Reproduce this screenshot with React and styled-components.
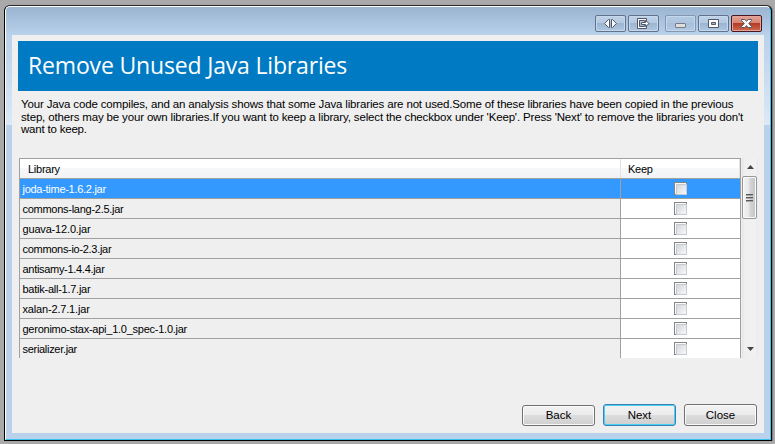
import React from "react";
import styled, { createGlobalStyle } from "styled-components";

const Global = createGlobalStyle`
  * { box-sizing: border-box; }
  html, body { margin: 0; background: #a9a9a9; overflow: hidden; }
`;

const Desktop = styled.div`
  width: 775px;
  height: 444px;
  padding: 5px 3px 3px 4px;
  background: #a9a9a9;
  font-family: "Liberation Sans", Arial, sans-serif;
  font-size: 11px;
  color: #000;
`;

const Frame = styled.div`
  height: 436px;
  border: 1px solid #000;
  border-top-color: #2b2b30;
  border-radius: 6px 6px 0 0;
  background: #000;
  box-shadow: 1px 0 1px #777;
`;

const Glass = styled.div`
  display: flex;
  flex-direction: column;
  height: 434px;
  border: 1px solid #fff;
  border-right-color: #35c4ee;
  border-bottom-color: #35c4ee;
  border-radius: 5px 5px 0 0;
  padding: 0 6px 6px;
  background:
    linear-gradient(#9ab4d1, #b9d1ea) 0 0 / 100% 28px no-repeat,
    linear-gradient(#b9d1ea, #dce9f7) 0 28px / 100% 90px no-repeat,
    #b9d1ea;
`;

const TitleBar = styled.div`
  flex: none;
  display: flex;
  justify-content: flex-end;
  height: 28px;
  padding: 8px 2px 0 0;
`;

const CaptionButton = styled.div`
  display: flex;
  align-items: center;
  justify-content: center;
  width: 31px;
  height: 17px;
  margin-left: ${(p) => (p.$gap ? 6 : 2)}px;
  border: 1px solid ${(p) => (p.$close ? "#4b1620" : p.$faint ? "#8496b0" : "#62728c")};
  border-radius: 2px;
  box-shadow: inset 0 0 0 1px ${(p) => (p.$close ? "#e3a59b" : "#c5d8ec")};
  background: ${(p) =>
    p.$close
      ? "linear-gradient(#e3a396 0, #d68373 47%, #b43a22 48%, #cb6b50 100%)"
      : p.$faint
      ? "linear-gradient(#b4cae3 0, #aec5df 47%, #a6bfdb 48%, #b2cae5 100%)"
      : "linear-gradient(#bfd2e7 0, #b3c9e1 47%, #9bb5d1 48%, #aec7e1 100%)"};

  svg {
    flex: none;
  }
`;

const Client = styled.div`
  flex: 1;
  min-height: 0;
  padding: 6px;
  background: #efefef;
`;

const Banner = styled.div`
  height: 50px;
  padding-left: 10px;
  background: #007ac3;
  color: #fff;
  font-family: "Open Sans", "Noto Sans", sans-serif;
  font-size: 23px;
  letter-spacing: -0.17px;
  line-height: 48px;
  white-space: nowrap;
`;

const Intro = styled.div`
  height: 67px;
  padding: 6px 0 0 3px;
  font-size: 11.5px;
`;

const IntroLine = styled.div`
  height: ${(p) => p.$h}px;
  line-height: 14px;
  white-space: nowrap;
  letter-spacing: ${(p) => p.$track || 0}px;
`;

const ListArea = styled.div`
  display: flex;
  height: 200px;
  margin-left: 1px;
`;

const Table = styled.div`
  width: 722px;
  height: 200px;
  overflow: hidden;
  border: solid #a0a0a0;
  border-width: 1px 1px 0 1px;
`;

const HeaderRow = styled.div`
  display: grid;
  grid-template-columns: 601px 119px;
  height: 19px;
  background: linear-gradient(#fff 0, #fff 45%, #f7f8fa 46%, #f1f2f4 100%);
`;

const HeaderCell = styled.div`
  padding-left: ${(p) => p.$indent}px;
  line-height: 21px;
  height: 19px;
  border-right: 1px solid #e1e2e4;
  letter-spacing: -0.25px;
`;

const Row = styled.div`
  display: grid;
  grid-template-columns: 600px 120px;
  height: 20px;
  border-top: 1px solid #a0a0a0;
  color: ${(p) => (p.$selected ? "#fff" : "#000")};
  background: ${(p) => (p.$selected ? "#3399ff" : "transparent")};
`;

const NameCell = styled.div`
  height: 19px;
  padding-left: 2.5px;
  line-height: 21px;
  white-space: nowrap;
  letter-spacing: ${(p) => p.$track || 0}px;
`;

const KeepCell = styled.div`
  display: flex;
  justify-content: center;
  height: 19px;
  padding-top: 3px;
  border-left: 1px solid #a0a0a0;
  background: ${(p) => (p.$selected ? "#3399ff" : "#fff")};
`;

const CheckBox = styled.div`
  flex: none;
  width: 13px;
  height: 13px;
  margin-right: 1px;
  border: 1px solid #858686;
  background: #fafafa;
  padding: 1px;

  &::before {
    content: "";
    display: block;
    width: 9px;
    height: 9px;
    border: 1px solid #c6cad1;
    background: linear-gradient(135deg, #d2d6dc, #f8f8f8);
  }
`;

const ScrollBar = styled.div`
  display: flex;
  flex-direction: column;
  align-items: center;
  width: 16px;
  height: 200px;
  margin-left: 1px;
  background: linear-gradient(90deg, #e6e6e6 0, #efefef 15%, #f1f1f1 85%, #e9e9e9);
`;

const ScrollArrow = styled.div`
  display: flex;
  align-items: center;
  justify-content: center;
  height: 18px;
`;

const Thumb = styled.div`
  display: flex;
  flex-direction: column;
  align-items: center;
  justify-content: center;
  gap: 1px;
  width: 15px;
  height: 43px;
  margin-right: 1px;
  border: 1px solid #979797;
  border-radius: 2px;
  box-shadow: inset 0 0 0 1px #fafafa;
  background: linear-gradient(90deg, #f4f4f4 0, #e6e6e7 48%, #d3d4d6 52%, #c3c4c8 100%);
`;

const Grip = styled.div`
  width: 7px;
  height: 2px;
  background: linear-gradient(#55585c 50%, #a6a8aa 50%);
`;

const Spacer = styled.div`
  flex: 1;
`;

const Footer = styled.div`
  display: flex;
  justify-content: flex-end;
  align-items: flex-end;
  gap: 8px;
  height: 68px;
  padding-right: 1px;
`;

const Button = styled.div`
  width: 73px;
  height: ${(p) => p.$h || 22}px;
  border: 1px solid ${(p) => (p.$primary ? "#3c7fb1" : "#707070")};
  border-radius: 3px;
  box-shadow: inset 0 0 0 1px ${(p) => (p.$primary ? "#48d1f7" : "#fbfbfb")};
  background: linear-gradient(#f2f2f2 0, #ebebeb 49%, #dddddd 50%, #cfcfcf 100%);
  text-align: center;
  font-size: 11.5px;
  line-height: ${(p) => (p.$h || 22) - 2}px;
`;

const files = [
  ["joda-time-1.6.2.jar", -0.28],
  ["commons-lang-2.5.jar", -0.27],
  ["guava-12.0.jar", -0.17],
  ["commons-io-2.3.jar", -0.3],
  ["antisamy-1.4.4.jar", -0.3],
  ["batik-all-1.7.jar", -0.25],
  ["xalan-2.7.1.jar", -0.17],
  ["geronimo-stax-api_1.0_spec-1.0.jar", -0.25],
  ["serializer.jar", -0.3],
];

const glyph = { fill: "#fafafa", stroke: "#535666", strokeWidth: 1 };

const ArrowsIcon = () => (
  <svg width="13" height="9" viewBox="0 0 13 9" {...glyph}>
    <path d="M5.5.5v8h-1L.6 4.5 4.5.5zM7.5.5v8h1l3.9-4-3.9-4z" />
  </svg>
);

const ExitIcon = () => (
  <svg width="13" height="11" viewBox="0 0 13 11" {...glyph}>
    <path d="M.5.5h9v3h-2v-1h-5v6h5v-1h2v3h-9z" />
    <path d="M4.5 4.5h4v-2l3.7 3-3.7 3v-2h-4z" />
  </svg>
);

const MinIcon = () => (
  <svg width="11" height="11" viewBox="0 0 11 11" {...glyph}>
    <rect x=".5" y="5.5" width="10" height="4" rx=".5" fill="#dedede" stroke="#777b86" />
  </svg>
);

const MaxIcon = () => (
  <svg width="11" height="9" viewBox="0 0 11 9" {...glyph}>
    <path fillRule="evenodd" d="M.5.5h10v8H.5zM3.5 3.5v2h4v-2z" />
  </svg>
);

const CloseIcon = () => (
  <svg width="11" height="9" viewBox="0 0 11 9" {...glyph}>
    <path d="M.5.5h3.2l1.8 1.7L7.3.5h3.2v1L7.8 4.5l2.7 3v1H7.3L5.5 6.8 3.7 8.5H.5v-1l2.7-3-2.7-3z" />
  </svg>
);

export default function App() {
  return (
    <Desktop>
      <Global />
      <Frame>
        <Glass>
          <TitleBar>
            <CaptionButton><ArrowsIcon /></CaptionButton>
            <CaptionButton><ExitIcon /></CaptionButton>
            <CaptionButton $gap $faint><MinIcon /></CaptionButton>
            <CaptionButton><MaxIcon /></CaptionButton>
            <CaptionButton $close><CloseIcon /></CaptionButton>
          </TitleBar>
          <Client>
            <Banner>Remove Unused Java Libraries</Banner>
            <Intro>
              <IntroLine $h={13} $track={-0.155}>Your Java code compiles, and an analysis shows that some Java libraries are not used.Some of these libraries have been copied in the previous</IntroLine>
              <IntroLine $h={12} $track={-0.155}>step, others may be your own libraries.If you want to keep a library, select the checkbox under 'Keep'. Press 'Next' to remove the libraries you don't</IntroLine>
              <IntroLine $h={13} $track={-0.2}>want to keep.</IntroLine>
            </Intro>
            <ListArea>
              <Table>
                <HeaderRow>
                  <HeaderCell $indent={8}>Library</HeaderCell>
                  <HeaderCell $indent={7}>Keep</HeaderCell>
                </HeaderRow>
                {files.map(([name, track], i) => (
                  <Row key={name} $selected={i === 0}>
                    <NameCell $track={track}>{name}</NameCell>
                    <KeepCell $selected={i === 0}><CheckBox /></KeepCell>
                  </Row>
                ))}
              </Table>
              <ScrollBar>
                <ScrollArrow><svg width="7" height="4"><path d="M0 4L3.5 0 7 4z" fill="#444" /></svg></ScrollArrow>
                <Thumb><Grip /><Grip /><Grip /></Thumb>
                <Spacer />
                <ScrollArrow><svg width="7" height="4"><path d="M0 0L3.5 4 7 0z" fill="#444" /></svg></ScrollArrow>
              </ScrollBar>
            </ListArea>
            <Footer>
              <Button $h={21}>Back</Button>
              <Button $primary>Next</Button>
              <Button>Close</Button>
            </Footer>
          </Client>
        </Glass>
      </Frame>
    </Desktop>
  );
}
